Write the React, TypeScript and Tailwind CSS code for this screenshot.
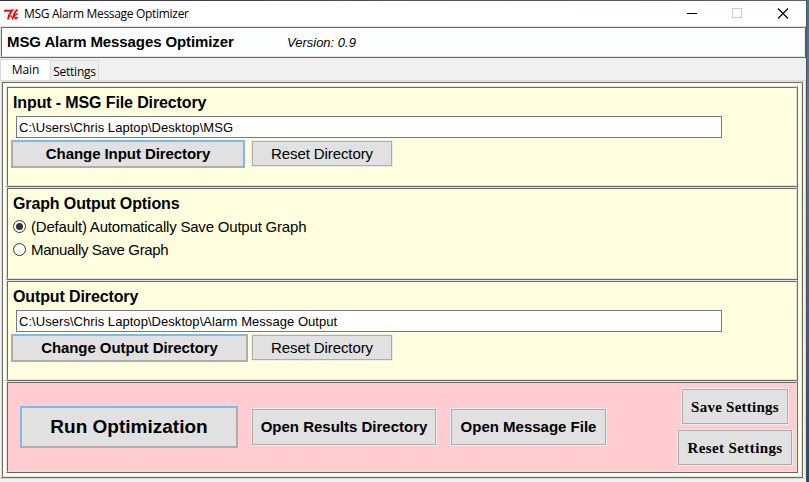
import type { ReactNode } from "react";

function Bevel({ className, inner, children }: { className: string; inner: string; children?: ReactNode }) {
  return (
    <div className={`border border-t-[#e3e3e3] border-l-[#e3e3e3] border-r-[#696969] border-b-[#696969] ${className}`}>
      <div className={`h-full border border-t-[#696969] border-l-[#696969] border-r-[#e3e3e3] border-b-[#e3e3e3] ${inner}`}>
        {children}
      </div>
    </div>
  );
}

function Button({ className, active, children }: { className: string; active?: boolean; children: ReactNode }) {
  return (
    <button className={`shrink-0 border ${active ? "border-[#7dbbea]" : "border-[#ececec]"} ${className}`}>
      <span className="flex h-full items-center justify-center border border-[#adadad] bg-[#e1e1e1] whitespace-nowrap">
        {children}
      </span>
    </button>
  );
}

function Heading({ children }: { children: ReactNode }) {
  return (
    <h2 className="ml-[5px] h-5 w-fit pt-px text-base leading-5 font-bold tracking-[-0.12px] whitespace-nowrap">
      {children}
    </h2>
  );
}

function DirectoryPanel({ title, path, action, actionClass, resetClass }: {
  title: string;
  path: string;
  action: string;
  actionClass: string;
  resetClass: string;
}) {
  return (
    <Bevel className="h-[101px]" inner="bg-[#ffffdf] pt-1">
      <Heading>{title}</Heading>
      <div className="mt-1 ml-2 flex h-[22px] w-[706px] items-center border border-[#7a7a7a] bg-white pt-0.5 pl-0.5 text-[13px]">
        <span className="tracking-[0.05px] whitespace-nowrap">{path}</span>
      </div>
      <div className="mt-0.5 ml-[3px] flex items-start">
        <Button active className={`h-7 text-[15px] font-bold tracking-[-0.07px] ${actionClass}`}>{action}</Button>
        <Button className={`h-[27px] w-[142px] text-[15px] tracking-[-0.1px] ${resetClass}`}>
          <span className="pt-0.5">Reset Directory</span>
        </Button>
      </div>
    </Bevel>
  );
}

function Radio({ checked, children }: { checked?: boolean; children: ReactNode }) {
  return (
    <div className="ml-[5px] flex h-[23px] items-center gap-[5px]">
      <span className="flex size-[13px] items-center justify-center rounded-full border border-[#333] bg-white">
        {checked && <span className="size-[7px] rounded-full bg-[#333]" />}
      </span>
      {children}
    </div>
  );
}

function TkIcon() {
  return (
    <svg width="16" height="16" viewBox="0 0 16 16" fill="none" stroke="#f00808" className="shrink-0">
      <path d="M0 5.500C1.500 3.500 3.500 5.500 8 4.500C6 7 4.500 9.500 4 13.500" strokeWidth="2" />
      <path d="M13.500 3.500C11 5.500 9.500 9 8.500 13.500" strokeWidth="1.800" />
      <path d="M14 7.500L10 10L12.500 13.200M11 13L14 11M6.500 9.500L8 11" strokeWidth="1.400" />
    </svg>
  );
}

export default function App() {
  return (
    <div className="flex h-[482px] w-[809px] overflow-hidden bg-[#f0f0f0] font-['Liberation_Sans',Arial,sans-serif] text-black">
      <div className="flex w-[806px] flex-col">
        <div className="h-px bg-linear-to-r from-[#34303a] via-[#55505f] to-[#56616d]" />
        <header className="flex h-[25px] bg-white">
          <div className="flex grow items-center gap-1 pl-1 font-['Open_Sans',sans-serif] text-xs">
            <TkIcon />
            <span className="tracking-[-0.31px] whitespace-nowrap">MSG Alarm Message Optimizer</span>
          </div>
          <svg width="130" height="25" viewBox="0 0 130 25" fill="none" shapeRendering="crispEdges">
            <path d="M11 12.500H21" stroke="#000" />
            <rect x="56.500" y="7.500" width="9" height="9" stroke="#ccc" />
            <path d="M102 7.500L112 17.500M112 7.500L102 17.500" stroke="#000" strokeWidth="1.200" shapeRendering="auto" />
          </svg>
        </header>
        <Bevel className="h-8" inner="flex items-center bg-[#fdfffe] pl-[5px]">
          <h1 className="w-[280px] text-[15px] font-bold tracking-[-0.1px] whitespace-nowrap">MSG Alarm Messages Optimizer</h1>
          <span className="pt-0.5 text-[13px] whitespace-nowrap italic">Version: 0.9</span>
        </Bevel>
        <nav className="flex h-[22px] items-end bg-[#f0f0f0] font-['Open_Sans',sans-serif] text-xs">
          <div className="flex h-[21px] w-[51px] items-center justify-center border-x border-t border-[#d9d9d9] bg-white">
            <span className="tracking-[-0.1px]">Main</span>
          </div>
          <div className="flex h-5 w-12 items-center justify-center border-t border-r border-[#d9d9d9] pt-0.5">
            <span className="tracking-[-0.25px]">Settings</span>
          </div>
        </nav>
        <main className="h-[399px] border-t border-r border-b border-[#d9d9d9] pr-0.5 pl-px">
          <Bevel className="h-[397px]" inner="bg-[#ffffdf] p-[3px]">
            <DirectoryPanel
              title="Input - MSG File Directory"
              path="C:\Users\Chris Laptop\Desktop\MSG"
              action="Change Input Directory"
              actionClass="w-[234px]"
              resetClass="ml-1.5"
            />
            <Bevel className="h-[93px]" inner="bg-[#ffffdf] pt-1">
              <Heading>Graph Output Options</Heading>
              <div className="mt-[2px] text-[15px] whitespace-nowrap">
                <Radio checked>
                  <span className="pt-0.5 tracking-[-0.2px]">(Default) Automatically Save Output Graph</span>
                </Radio>
                <Radio>
                  <span className="pt-0.5 tracking-[-0.37px]">Manually Save Graph</span>
                </Radio>
              </div>
            </Bevel>
            <DirectoryPanel
              title="Output Directory"
              path="C:\Users\Chris Laptop\Desktop\Alarm Message Output"
              action="Change Output Directory"
              actionClass="w-[237px]"
              resetClass="ml-[3px]"
            />
            <Bevel className="h-[92px]" inner="flex items-start bg-[#ffccd2] pl-3">
              <Button active className="mt-[23px] h-[42px] w-[218px] text-[19px] font-bold">Run Optimization</Button>
              <Button className="mt-[25px] ml-[13px] h-[38px] w-[186px] text-[15px] font-bold">Open Results Directory</Button>
              <Button className="mt-[25px] ml-[13px] h-[38px] w-[157px] text-[15px] font-bold">Open Message File</Button>
              <div className="mt-[5px] ml-[70px] flex w-[116px] flex-col items-center gap-1 font-['Liberation_Serif','Times_New_Roman',serif] text-[15px] font-bold">
                <Button className="h-[37px] w-[108px]">
                  <span className="pt-0.5 tracking-[0.25px]">Save Settings</span>
                </Button>
                <Button className="h-[37px] w-[116px]">
                  <span className="pt-0.5 tracking-[0.4px]">Reset Settings</span>
                </Button>
              </div>
            </Bevel>
          </Bevel>
        </main>
        <footer className="grow bg-[#f0f0f0]" />
      </div>
      <aside className="w-[3px] border-l border-[#48525c] bg-linear-to-b from-[#476f93] via-[#77727d] via-30% to-[#294965]" />
    </div>
  );
}
